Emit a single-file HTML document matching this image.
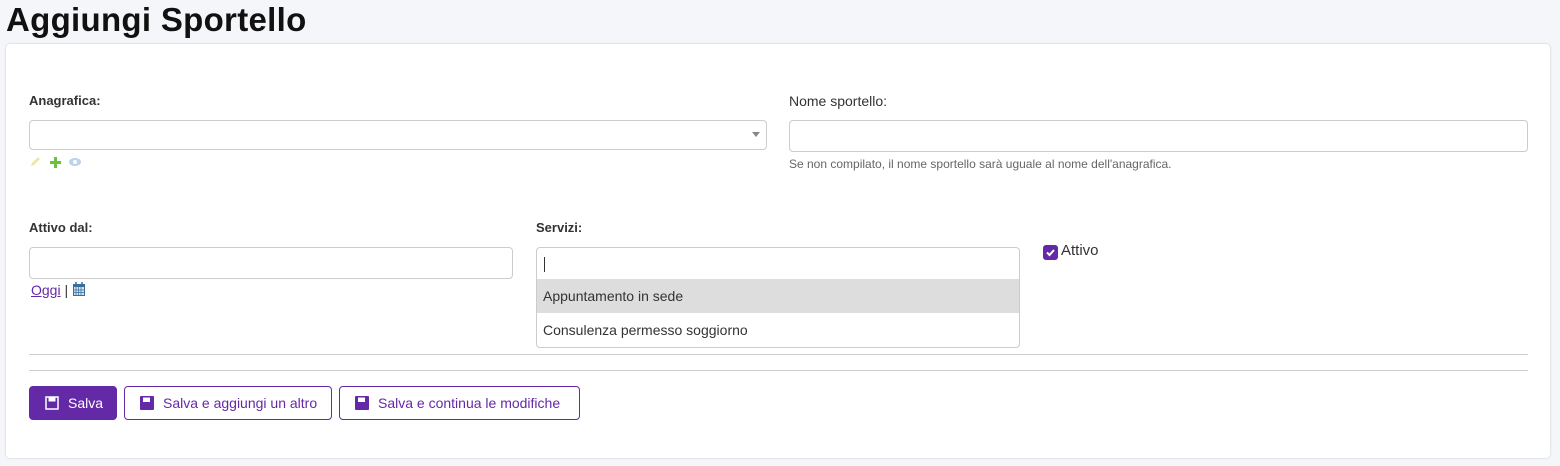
<!DOCTYPE html>
<html><head><meta charset="utf-8"><style>
*{box-sizing:border-box;margin:0;padding:0}
body{width:1560px;height:466px;background:#f4f6f9;font-family:"Liberation Sans",sans-serif;position:relative;overflow:hidden;color:#222}
.a{position:absolute}
h1{position:absolute;left:6px;top:1px;font-size:33px;font-weight:bold;color:#111;letter-spacing:0.3px}
.card{left:6px;top:44px;width:1544px;height:414px;background:#fff;border-radius:4px;box-shadow:0 0 2px rgba(0,0,0,.2)}
.lbl{font-size:13px;font-weight:bold;color:#333}
.inp{border:1px solid #ccc;border-radius:4px;background:#fff}
.help{font-size:12px;color:#666}
.dd{font-size:14px;color:#333;padding-left:6px;line-height:34px}
.btn{height:34px;border:1px solid #6429a6;border-radius:4px;font-size:14px;color:#6429a6;line-height:32px;padding-left:15px;background:#fff}
.btn svg{vertical-align:-2px;margin-right:9px}
hr{position:absolute;border:0;border-top:1px solid #ccc;left:29px;width:1499px}
</style></head><body>
<h1>Aggiungi Sportello</h1>
<div class="a card"></div>
<div class="a lbl" style="left:29px;top:93px">Anagrafica:</div>
<div class="a inp" style="left:29px;top:120px;width:738px;height:30px"></div>
<div class="a" style="left:752px;top:132px;width:0;height:0;border-left:4px solid transparent;border-right:4px solid transparent;border-top:5px solid #888"></div>
<svg class="a" style="left:29px;top:155px" width="60" height="13"><path d="M2 11l1-3 6-6 2 2-6 6z" fill="#f5e3a0"/><path d="M25 2h3v4h4v3h-4v4h-3V9h-4V6h4z" fill="#6cc040"/><ellipse cx="46" cy="7" rx="6" ry="4" fill="#bcd3ea"/><circle cx="46" cy="7" r="2" fill="#fff"/></svg>
<div class="a" style="left:789px;top:93px;font-size:14px;color:#333">Nome sportello:</div>
<div class="a inp" style="left:789px;top:120px;width:739px;height:32px"></div>
<div class="a help" style="left:789px;top:157px">Se non compilato, il nome sportello sarà uguale al nome dell'anagrafica.</div>
<div class="a lbl" style="left:29px;top:220px">Attivo dal:</div>
<div class="a inp" style="left:29px;top:247px;width:484px;height:32px"></div>
<div class="a" style="left:31px;top:282px;font-size:14px;color:#6429a6"><span style="text-decoration:underline">Oggi</span> <span style="color:#333">|</span> <svg width="14" height="15" style="vertical-align:-2px"><rect x="1" y="2" width="12" height="12" fill="#3a6d99"/><rect x="2" y="5" width="10" height="8" fill="#cfe0ef"/><path d="M4 5v8M6.5 5v8M9 5v8M2 8h10M2 10.5h10" stroke="#3a6d99" stroke-width=".7"/><path d="M4 0v3M10 0v3" stroke="#3a6d99" stroke-width="1.5"/></svg></div>
<div class="a lbl" style="left:536px;top:220px">Servizi:</div>
<div class="a inp" style="left:536px;top:247px;width:484px;height:101px"></div>
<div class="a" style="left:544px;top:257px;width:1px;height:15px;background:#333"></div>
<div class="a" style="left:537px;top:279px;width:482px;height:1px;background:#ccc"></div>
<div class="a dd" style="left:537px;top:279px;width:482px;height:34px;background:#ddd">Appuntamento in sede</div>
<div class="a dd" style="left:537px;top:313px;width:482px;height:34px">Consulenza permesso soggiorno</div>
<div class="a" style="left:1043px;top:245px;width:15px;height:15px;background:#6429a6;border-radius:3px"></div>
<svg class="a" style="left:1043px;top:245px" width="15" height="15"><path d="M4 7.5l2.5 2.5 4.5-5" stroke="#fff" stroke-width="2" fill="none"/></svg>
<div class="a" style="left:1061px;top:242px;font-size:15px;color:#333">Attivo</div>
<hr style="top:354px"><hr style="top:370px">
<div class="a btn" style="left:29px;top:386px;width:88px;background:#6429a6;color:#fff"><svg width="14" height="14"><rect x="1" y="1" width="12" height="12" fill="none" stroke="#fff" stroke-width="1.5"/><rect x="3.5" y="1" width="7" height="4.5" fill="#fff"/></svg>Salva</div>
<div class="a btn" style="left:124px;top:386px;width:208px"><svg width="14" height="14"><rect x="0" y="0" width="14" height="14" rx="1" fill="#6429a6"/><rect x="3" y="1.5" width="7" height="4.5" fill="#fff"/></svg>Salva e aggiungi un altro</div>
<div class="a btn" style="left:339px;top:386px;width:241px"><svg width="14" height="14"><rect x="0" y="0" width="14" height="14" rx="1" fill="#6429a6"/><rect x="3" y="1.5" width="7" height="4.5" fill="#fff"/></svg>Salva e continua le modifiche</div>
</body></html>
